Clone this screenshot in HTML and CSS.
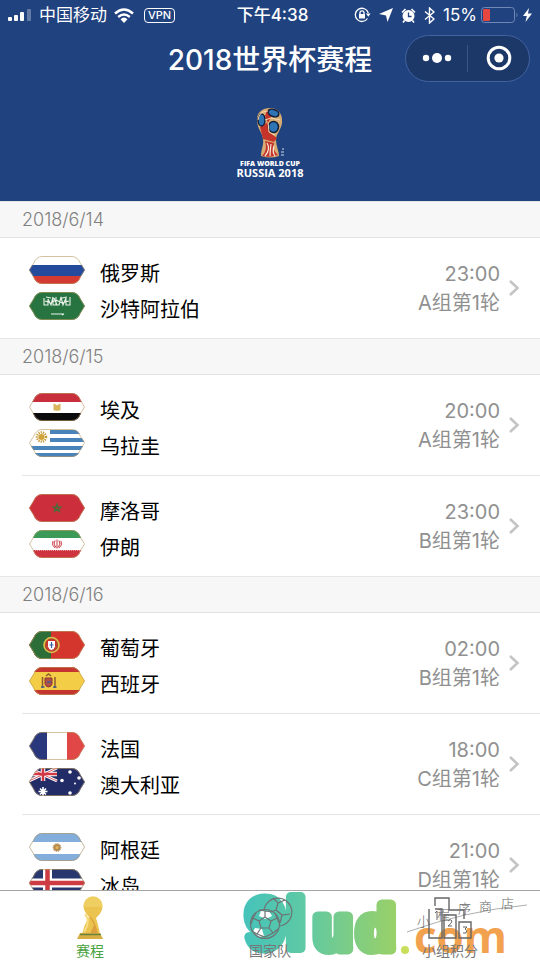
FILE: index.html
```html
<!DOCTYPE html>
<html lang="zh-CN">
<head>
<meta charset="utf-8">
<meta name="viewport" content="width=device-width, initial-scale=1">
<title>2018世界杯赛程</title>
<link rel="stylesheet" href="styles.css">
</head>
<body>
<svg class="defs" aria-hidden="true">
  <defs>
    <clipPath id="badge"><path d="M0 14 4 7.500Q7 0 13 0H43Q49 0 52 7.500L56 14 52 20.500Q49 28 43 28H13Q7 28 4 20.500Z"/></clipPath>
    <symbol id="rim" viewBox="0 0 56 28"><path d="M.5 14 4.500 7.500Q7.500 .5 13 .5H43Q48.500 .5 51.500 7.500L55.500 14 51.500 20.500Q48.500 27.500 43 27.500H13Q7.500 27.500 4.500 20.500Z" fill="none" stroke="#b99a62" stroke-opacity=".6"/></symbol>
    <symbol id="chevron" viewBox="0 0 12 18"><path d="M2 2 9.500 9 2 16" fill="none" stroke="#c4c4c4" stroke-width="2.600"/></symbol>
  </defs>
</svg>

<header class="top">
  <div class="status">
    <div class="status-left">
      <svg width="24" height="12" viewBox="0 0 24 12" fill="#fff"><rect y="8" width="4" height="4" rx="1"/><rect x="6" y="6" width="4" height="6" rx="1"/><rect x="12" y="3" width="4" height="9" rx="1"/><rect x="19" y="0" width="4" height="12" rx="1" opacity=".3"/></svg>
      <span class="carrier">中国移动</span>
      <svg width="20" height="15" viewBox="0 0 20 15" fill="none" stroke="#fff" stroke-width="2.400"><path d="M1 5.500Q10-2.500 19 5.500M4.200 9Q10 4 15.800 9"/><path d="M6.500 11.200Q10 8 13.500 11.200L10 15Z" fill="#fff" stroke="none"/></svg>
      <span class="vpn">VPN</span>
    </div>
    <span class="clock">下午4:38</span>
    <div class="status-right">
      <svg width="17" height="16" viewBox="0 0 17 16" fill="none" stroke="#fff" stroke-width="1.300"><path d="M13.500 11.500A6.600 6.600 0 1 1 14.300 6"/><path d="M12 6.500h4.600L14.300 9.800Z" fill="#fff" stroke="none"/><rect x="5" y="7" width="6" height="4.500" fill="#fff" stroke="none"/><path d="M6 7.500V5.800a2 2 0 0 1 4 0V7.500"/></svg>
      <svg width="14" height="14" viewBox="0 0 14 14" fill="#fff"><path d="M14 0 8.500 14 7 7.500 0 6Z"/></svg>
      <svg width="15" height="15" viewBox="0 0 15 15"><circle cx="7.500" cy="8" r="6" fill="#fff"/><path d="M1 4.500 4.500 1M10.500 1 14 4.500M3.500 12.500 2 14.500M11.500 12.500 13 14.500" stroke="#fff" stroke-width="1.600"/><path d="M7.500 4.500V8.500L10.500 8.500" fill="none" stroke="#20427f" stroke-width="1.300"/></svg>
      <svg width="11" height="17" viewBox="0 0 11 17" fill="none" stroke="#fff" stroke-width="1.400"><path d="M1 4.500 10 12 5.500 16V1L10 5 1 12.500"/></svg>
      <span class="percent">15%</span>
      <svg width="38" height="17" viewBox="0 0 38 17"><rect x=".5" y=".5" width="33" height="15" rx="3" fill="none" stroke="#6f88b5"/><rect x="2" y="2" width="7" height="12" rx="1" fill="#e5463f"/><path d="M35.500 5.500q2 2.500 0 5Z" fill="#6f88b5"/></svg>
      <svg width="9" height="14" viewBox="0 0 9 14" fill="#fff"><path d="M6 0 0 8H3.800L2.500 14 9 5.500H5Z"/></svg>
    </div>
  </div>
  <div class="nav">
    <h1>2018世界杯赛程</h1>
    <div class="capsule">
      <button type="button" aria-label="更多"><svg width="30" height="12" viewBox="0 0 30 12" fill="#fff"><circle cx="4" cy="6" r="3.200"/><circle cx="15" cy="6" r="5"/><circle cx="26" cy="6" r="3.200"/></svg></button>
      <button type="button" aria-label="关闭"><svg width="26" height="26" viewBox="0 0 26 26"><circle cx="13" cy="13" r="10.800" fill="none" stroke="#fff" stroke-width="3"/><circle cx="13" cy="13" r="4.600" fill="#fff"/></svg></button>
    </div>
  </div>
  <svg class="cup-logo" width="120" height="95" viewBox="0 0 120 95" role="img" aria-label="FIFA World Cup Russia 2018">
    <path d="M47 25C46 16 53 12 60 12C68 12 73 18 72 27C71 34 66 38 66 44C66 50 69 55 69 60Q60 63 51 60C51 53 54 49 53 43C52 36 48 34 47 25Z" fill="#d9ac72"/>
    <path d="M50 31 58 26 60 37 67 42 64 46 53 43Z" fill="#c5342b"/>
    <path d="M57 14 65 13 61 21 58 27 55 20Z" fill="#c5342b"/>
    <g fill="#2f75b5" stroke="#101f3d" stroke-width="1.500"><ellipse cx="51.500" cy="24" rx="3.500" ry="6"/><ellipse cx="63.500" cy="17" rx="5.500" ry="3.500" transform="rotate(20 63.500 17)"/><ellipse cx="63.500" cy="31" rx="5" ry="5.500"/></g>
    <g fill="none" stroke="#f4d7ae"><path d="M48 24Q49 15 58 15M55 24 61 22 70 24M58 26 59 36 65 39"/></g>
    <path d="M55 45 64 47Q62 54 68 59 60 62 52 60Q58 54 55 45Z" fill="#c5342b"/>
    <path d="M57 47Q61 53 55 60M61 48Q60 55 60 60M64 50Q62 56 65 60" fill="none" stroke="#f7ead9" stroke-width="1.200"/>
    <path d="M71 59h3M71 56h3M72 53h2" stroke="#cfd8ea"/>
    <text class="logo-small" x="60" y="70" text-anchor="middle">FIFA WORLD CUP</text>
    <text class="logo-large" x="60" y="81" text-anchor="middle">RUSSIA 2018</text>
  </svg>
</header>

<main class="schedule" id="schedule">
  <section>
    <h2>2018/6/14</h2>
    <a class="match" href="#m1">
      <span class="teams">
        <span class="team"><svg class="flag" viewBox="0 0 56 28"><g clip-path="url(#badge)"><path fill="#fff" d="M0 0h56v9H0z"/><path fill="#244a9b" d="M0 9h56v11H0z"/><path fill="#d33a31" d="M0 20h56v8H0z"/></g><use href="#rim"/></svg>俄罗斯</span>
        <span class="team"><svg class="flag" viewBox="0 0 56 28"><g clip-path="url(#badge)"><path fill="#287440" d="M0 0h56v28H0z"/><path d="M15 6v7h4V7l3 6 2-8v8h4l-3-7M27 5v8h3l2-8 2 8 3-7v7h4V5M16 9l6 2 5-3 6 3 7-2M17 5l5 1M33 6l5-1M22 22h13l-2 1" fill="none" stroke="#e9f1e9" stroke-width="1.100"/></g><use href="#rim"/></svg>沙特阿拉伯</span>
      </span>
      <span class="info"><span>23:00</span><span>A组第1轮</span></span>
      <svg class="arrow"><use href="#chevron"/></svg>
    </a>
  </section>
  <section>
    <h2>2018/6/15</h2>
    <a class="match" href="#m2">
      <span class="teams">
        <span class="team"><svg class="flag" viewBox="0 0 56 28"><g clip-path="url(#badge)"><path fill="#fff" d="M0 0h56v28H0z"/><path fill="#c92e3c" d="M0 0h56v9H0z"/><path fill="#0b0b0d" d="M0 20h56v8H0z"/><path d="M25 11v6h2v-3l1 4 1-4v3h2v-6l-3 2Z" fill="#d9b45c" stroke="#d9b45c"/></g><use href="#rim"/></svg>埃及</span>
        <span class="team"><svg class="flag" viewBox="0 0 56 28"><g clip-path="url(#badge)"><path fill="#fff" d="M0 0h56v28H0z"/><path d="M21 3h35M21 11h35M0 19h56M0 26h56" stroke="#4883ba" stroke-width="4"/><circle cx="12.500" cy="8" r="4.500" fill="none" stroke="#c59c3a" stroke-width="2.500" stroke-dasharray="1.200 1"/><circle cx="12.500" cy="8" r="3" fill="#d1a33b"/></g><use href="#rim"/></svg>乌拉圭</span>
      </span>
      <span class="info"><span>20:00</span><span>A组第1轮</span></span>
      <svg class="arrow"><use href="#chevron"/></svg>
    </a>
    <a class="match" href="#m3">
      <span class="teams">
        <span class="team"><svg class="flag" viewBox="0 0 56 28"><g clip-path="url(#badge)"><path fill="#cc2f3b" d="M0 0h56v28H0z"/><path d="M28 10 30.500 17.500 24 13H32L25.500 17.500Z" fill="none" stroke="#4c6a38" stroke-width="1.200"/></g><use href="#rim"/></svg>摩洛哥</span>
        <span class="team"><svg class="flag" viewBox="0 0 56 28"><g clip-path="url(#badge)"><path fill="#fff" d="M0 0h56v28H0z"/><path fill="#3b9a58" d="M0 0h56v8H0z"/><path fill="#cf3340" d="M0 20h56v8H0z"/><path d="M4 8.500h48M4 20h48" stroke="#fff" stroke-dasharray="1 1"/><path d="M28 9.500v9M26 10.500q-2.500 3.500 1 7M30 10.500q2.500 3.500-1 7M24 11q-2 4 2 7M32 11q2 4-2 7" fill="none" stroke="#cb3a45"/></g><use href="#rim"/></svg>伊朗</span>
      </span>
      <span class="info"><span>23:00</span><span>B组第1轮</span></span>
      <svg class="arrow"><use href="#chevron"/></svg>
    </a>
  </section>
  <section>
    <h2>2018/6/16</h2>
    <a class="match" href="#m4">
      <span class="teams">
        <span class="team"><svg class="flag" viewBox="0 0 56 28"><g clip-path="url(#badge)"><path fill="#d4362d" d="M0 0h56v28H0z"/><path fill="#2d6e38" d="M0 0h22v28H0z"/><circle cx="22.500" cy="14" r="7.500" fill="#b0452b" stroke="#dcc04c" stroke-width="1.600"/><path d="M18.500 9.500h8v6q-1 4-4 4t-4-4Z" fill="#fff" stroke="#cf2f2b"/><path d="M22.500 11v6M20.500 14h4" stroke="#345d9c" stroke-width="1.200"/></g><use href="#rim"/></svg>葡萄牙</span>
        <span class="team"><svg class="flag" viewBox="0 0 56 28"><g clip-path="url(#badge)"><path fill="#f3cd46" d="M0 0h56v28H0z"/><path fill="#c5352f" d="M0 0h56v5H0zM0 23h56v5H0z"/><path d="M16 11h7v6q-1 3-3.500 3T16 17Z" fill="#b25048" stroke="#8b3430"/><path d="M13.500 10v11M26 10v11M17 9l2.500-2L22 9" stroke="#8f5a2d" stroke-width="1.500" fill="none"/><path d="M12 20h3.500M24 20h3.500M18 15h4" stroke="#445c90" stroke-width="1.500"/></g><use href="#rim"/></svg>西班牙</span>
      </span>
      <span class="info"><span>02:00</span><span>B组第1轮</span></span>
      <svg class="arrow"><use href="#chevron"/></svg>
    </a>
    <a class="match" href="#m5">
      <span class="teams">
        <span class="team"><svg class="flag" viewBox="0 0 56 28"><g clip-path="url(#badge)"><path fill="#fff" d="M0 0h56v28H0z"/><path fill="#29377c" d="M0 0h18v28H0z"/><path fill="#e04746" d="M38 0h18v28H38z"/></g><use href="#rim"/></svg>法国</span>
        <span class="team"><svg class="flag" viewBox="0 0 56 28"><g clip-path="url(#badge)"><path fill="#222d68" d="M0 0h56v28H0z"/><path d="M0 0 28 13M28 0 0 13" stroke="#fff" stroke-width="3"/><path d="M14 0v13M0 6h28" stroke="#fff" stroke-width="4.500"/><path d="M14 0v13M0 6h28" stroke="#d23944" stroke-width="2.500"/><path d="M0 0 28 13M28 0 0 13" stroke="#d23944" stroke-width=".8"/><path d="M14 19v9M9.500 23.500h9M11 20.500l6 6M17 20.500l-6 6" stroke="#fff" stroke-width="1.600"/><g fill="#fff"><circle cx="33" cy="12.500" r="1.800"/><circle cx="41" cy="4" r="1.800"/><circle cx="41" cy="25" r="1.800"/><circle cx="50" cy="10" r="1.800"/><circle cx="46" cy="15.500" r="1"/></g></g><use href="#rim"/></svg>澳大利亚</span>
      </span>
      <span class="info"><span>18:00</span><span>C组第1轮</span></span>
      <svg class="arrow"><use href="#chevron"/></svg>
    </a>
    <a class="match" href="#m6">
      <span class="teams">
        <span class="team"><svg class="flag" viewBox="0 0 56 28"><g clip-path="url(#badge)"><path fill="#83aedb" d="M0 0h56v28H0z"/><path fill="#fff" d="M0 9h56v12H0z"/><circle cx="28" cy="14.500" r="3.600" fill="#b7894c"/><circle cx="28" cy="14.500" r="4" fill="none" stroke="#a9834e" stroke-dasharray="1 1"/><circle cx="28" cy="14.500" r="1.500" fill="#e0b660"/></g><use href="#rim"/></svg>阿根廷</span>
        <span class="team"><svg class="flag" viewBox="0 0 56 28"><g clip-path="url(#badge)"><path fill="#28376e" d="M0 0h56v28H0z"/><path d="M18.500 0v28M0 14h56" stroke="#fff" stroke-width="9"/><path d="M18.500 0v28M0 14h56" stroke="#cd3c42" stroke-width="4.500"/></g><use href="#rim"/></svg>冰岛</span>
      </span>
      <span class="info"><span>21:00</span><span>D组第1轮</span></span>
      <svg class="arrow"><use href="#chevron"/></svg>
    </a>
  </section>
</main>

<footer class="tabbar">
  <svg class="brand" width="300" height="69" viewBox="0 0 300 69" aria-hidden="true">
    <defs><linearGradient id="sea" gradientUnits="userSpaceOnUse" x1="13" y1="0" x2="163" y2="0"><stop offset="0" stop-color="#45c3bb"/><stop offset=".4" stop-color="#5ec9a4"/><stop offset="1" stop-color="#98d06a"/></linearGradient></defs>
    <g class="brand-main" fill="url(#sea)" stroke="url(#sea)"><text x="16" y="57">9</text><text x="56" y="57">l</text><text class="brand-round" x="84" y="58">u</text><text class="brand-round" x="127" y="58">d</text></g>
    <circle cx="175" cy="59" r="4" fill="#c9df5b"/>
    <text class="brand-com" x="184" y="62">com</text>
    <path d="M177 41Q235 20 297 14" fill="none" stroke="#999" stroke-width=".8"/>
    <g class="brand-shop"><text x="187" y="35">小</text><text x="207" y="28">程</text><text x="228" y="22">序</text><text x="249" y="20">商</text><text x="271" y="17">店</text></g>
  </svg>
  <nav class="tabs">
    <a class="tab active" href="#schedule">
      <svg width="46" height="46" viewBox="0 0 46 46"><circle cx="26" cy="11" r="9.700" fill="#efce62"/><path d="M17 12Q18 18 22 22 17 30 15 39H33Q31 29 29 23 35 18 35 12Z" fill="#ebc34f"/><path d="M22 20Q28 25 31 39H23L27 30Z" fill="#dda03e"/><path d="M18 19Q24 26 17 37" fill="none" stroke="#f7dd83" stroke-width="2"/><path d="M13 38H33L36 44H10Z" fill="#d8af45"/><path d="M13 39.500H34" stroke="#68843c" stroke-width="1.500"/></svg>
      <span>赛程</span>
    </a>
    <a class="tab" href="#teams">
      <svg width="46" height="46" viewBox="0 0 46 46" fill="none" stroke="#6d7474" stroke-width="1.200"><path d="M17 15A14 14 0 1 1 33 31"/><path d="M26 3 31 8 38 5M31 8 29 15 35 20 43 19M35 20 33 28M29 15 24 17"/><path d="M14 16h8l3 5-6 3-7-3ZM8 33l7 1 2 7-5 1-6-5Z" fill="#fff" stroke="none"/><circle cx="18" cy="29" r="14.500"/><path d="M18 22 24 26 22 33H14L12 26ZM18 22V16L12 15M18 16 25 17M24 26 30 23 28 18M30 23 32 28M22 33 26 38M14 33 10 39M12 26 6 23 9 18M6 23 4 29M10 39 5 36M26 38 31 34M10 39 18 42 26 38"/></svg>
      <span>国家队</span>
    </a>
    <a class="tab" href="#points">
      <svg width="46" height="46" viewBox="0 0 46 46" fill="none" stroke="#666" stroke-width="1.400"><path d="M8 11V3H22V15H37V24M2 14V43H15V14H8M17 43V20H29V43ZM32 43V27H44V43Z"/><path d="M8 18l2-2v9M21 26q2-3 4 0 0 2-4 5h4M36 32h4l-2 2q3 1 1 4h-3" stroke-width="1"/></svg>
      <span>小组积分</span>
    </a>
  </nav>
</footer>
</body>
</html>
```
FILE: styles.css
```css
* { box-sizing: border-box; }

body {
  margin: 0;
  height: 100vh;
  display: flex;
  flex-direction: column;
  background: #fff;
  color: #000;
  font-family: Inter, "Noto Sans CJK SC", sans-serif;
  font-size: 20px;
}

a { color: inherit; text-decoration: none; }
svg { display: block; flex: none; }
.defs { position: absolute; width: 0; height: 0; }

/* Header */
.top {
  flex: none;
  display: flex;
  flex-direction: column;
  align-items: stretch;
  background: #20427f;
  color: #fff;
  padding-bottom: 10px;
}

.status {
  display: grid;
  grid-template-columns: 1fr auto 1fr;
  align-items: center;
  height: 30px;
  padding: 0 8px;
  font-size: 17px;
  line-height: 24px;
}

.status-left, .status-right { display: flex; align-items: center; gap: 8px; }
.status-left { gap: 7px; }
.status-right { justify-content: flex-end; }
.status-right .percent { margin-right: -4px; }
.status-right svg:last-child { margin-left: -4px; }
.clock { font-weight: 500; padding-left: 5px; }

.vpn {
  border: 1px solid #fff;
  border-radius: 4px;
  padding: 0 3px;
  font-size: 11px;
  line-height: 13px;
  font-weight: 500;
  margin-left: 3px;
}

.nav {
  display: grid;
  grid-template-columns: 1fr auto 1fr;
  align-items: center;
  height: 56px;
  padding: 0 10px;
}

.nav h1 {
  grid-column: 2;
  margin: 0;
  padding-top: 4px;
  font-size: 28px;
  line-height: 40px;
  font-weight: 500;
}

.capsule {
  justify-self: end;
  display: flex;
  width: 125px;
  height: 47px;
  border: 1px solid #4362a0;
  border-radius: 24px;
  background: #1b3869;
}

.capsule button {
  flex: 1;
  display: flex;
  align-items: center;
  justify-content: center;
  margin: 9px 0;
  padding: 0;
  border: 0;
  background: none;
}

.capsule button + button { border-left: 1px solid #3c5486; }

.cup-logo { align-self: center; margin-top: 10px; }
.cup-logo text { fill: #fff; font-family: "Open Sans", sans-serif; }
.cup-logo .logo-small { font-size: 7px; font-weight: 800; }
.cup-logo .logo-large { font-size: 11px; font-weight: 700; }

/* Schedule */
.schedule { flex: 1; min-height: 0; overflow: hidden; }

.schedule h2 {
  margin: 0;
  height: 37px;
  padding: 0 22px;
  border-top: 1px solid #e6e6e6;
  border-bottom: 1px solid #e2e2e2;
  background: #f7f7f7;
  color: #808080;
  font-size: 18px;
  line-height: 35px;
  font-weight: 300;
}

.match {
  display: flex;
  align-items: center;
  gap: 8px;
  padding: 18px 20px 18px 29px;
}

.match + .match {
  border-top: 1px solid #e5e5e5;
  margin-left: 22px;
  padding-left: 7px;
}

.teams { flex: 1; display: flex; flex-direction: column; gap: 8px; }
.team { display: flex; align-items: flex-start; gap: 15px; height: 28px; line-height: 36px; }
.flag { width: 56px; height: 28px; }
.info { display: flex; flex-direction: column; padding-top: 2px; text-align: right; color: #909090; line-height: 29px; }
.arrow { width: 12px; height: 18px; }

/* Tab bar */
.tabbar {
  flex: none;
  position: relative;
  border-top: 1px solid #a5a5a5;
  background: #fff;
}

.tabs { position: relative; display: grid; grid-template-columns: repeat(3, 1fr); }

.tab {
  display: flex;
  flex-direction: column;
  align-items: center;
  padding-top: 4px;
  color: #777;
  font-size: 14px;
  line-height: 19px;
}

.tab.active { color: #48a23f; }

.brand { position: absolute; top: 0; left: calc(50% - 40px); }
.brand-main { font-family: "Liberation Sans Narrow", "Liberation Sans", sans-serif; font-weight: 700; font-size: 70px; stroke-width: 10px; stroke-linejoin: round; }
.brand-round { font-size: 62px; stroke-width: 11px; }
.brand-com { font-family: "Open Sans", sans-serif; font-weight: 700; font-size: 44px; fill: #f2a14e; }
.brand-shop { font-family: "Noto Sans CJK SC", sans-serif; font-weight: 300; font-size: 13px; fill: #666; }
```
